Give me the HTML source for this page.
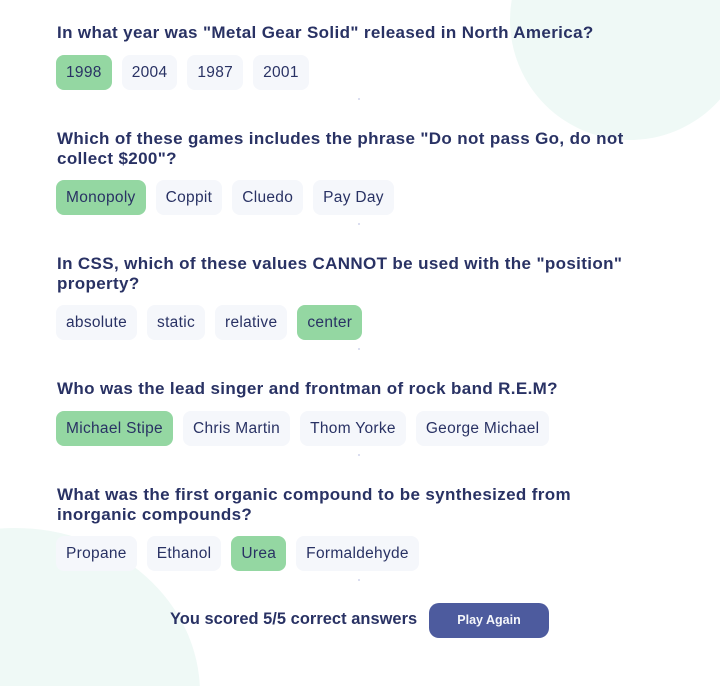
<!DOCTYPE html>
<html style="overflow:hidden;width:720px;height:686px"><head><style>
body{margin:0;width:720px;height:686px;overflow:hidden;background:#fff;font-family:"Liberation Sans",sans-serif;color:#293264}
.wrap{position:relative;width:720px;height:686px;overflow:hidden}
.blob1{position:absolute;left:510px;top:-100px;width:240px;height:240px;border-radius:50%;background:#EFF9F6}
.blob2{position:absolute;left:-170px;top:528px;width:370px;height:330px;border-radius:50%;background:#EFF9F6}
.q{position:absolute;left:57px;width:580px}
.q h2{margin:0;font-size:17px;font-weight:bold;line-height:20px;letter-spacing:0.36px}
.opts{position:absolute;left:56px;display:flex;gap:10px}
.b{height:35px;line-height:35px;padding:0 10px;border-radius:8px;background:#F5F7FB;font-size:15.5px;letter-spacing:0.3px;color:#293264}
.b.s{background:#94D7A2}
.dot{position:absolute;width:2px;height:2px;background:#dbdef0}
.score{position:absolute;left:170px;top:610px;font-size:16.4px;font-weight:bold;letter-spacing:0.05px}
.play{position:absolute;left:429px;top:603px;width:120px;height:35px;border-radius:10px;background:#4D5B9E;color:#F5F7FB;font-size:12.5px;font-weight:bold;text-align:center;line-height:35px}
</style></head><body><div class="wrap">
<div class="blob1"></div><div class="blob2"></div>
<div class="q" style="top:23px;width:640px"><h2>In what year was "Metal Gear Solid" released in North America?</h2></div>
<div class="opts" style="top:55px"><span class="b s">1998</span><span class="b">2004</span><span class="b">1987</span><span class="b">2001</span></div>
<div class="dot" style="left:358px;top:98px"></div>
<div class="q" style="top:129px"><h2>Which of these games includes the phrase "Do not pass Go, do not collect $200"?</h2></div>
<div class="opts" style="top:180px"><span class="b s">Monopoly</span><span class="b">Coppit</span><span class="b">Cluedo</span><span class="b">Pay Day</span></div>
<div class="dot" style="left:358px;top:223px"></div>
<div class="q" style="top:254px"><h2>In CSS, which of these values CANNOT be used with the "position" property?</h2></div>
<div class="opts" style="top:305px"><span class="b">absolute</span><span class="b">static</span><span class="b">relative</span><span class="b s">center</span></div>
<div class="dot" style="left:358px;top:348px"></div>
<div class="q" style="top:379px"><h2>Who was the lead singer and frontman of rock band R.E.M?</h2></div>
<div class="opts" style="top:411px"><span class="b s">Michael Stipe</span><span class="b">Chris Martin</span><span class="b">Thom Yorke</span><span class="b">George Michael</span></div>
<div class="dot" style="left:358px;top:454px"></div>
<div class="q" style="top:485px"><h2>What was the first organic compound to be synthesized from inorganic compounds?</h2></div>
<div class="opts" style="top:536px"><span class="b">Propane</span><span class="b">Ethanol</span><span class="b s">Urea</span><span class="b">Formaldehyde</span></div>
<div class="dot" style="left:358px;top:579px"></div>
<div class="score">You scored 5/5 correct answers</div>
<div class="play">Play Again</div>
</div></body></html>
